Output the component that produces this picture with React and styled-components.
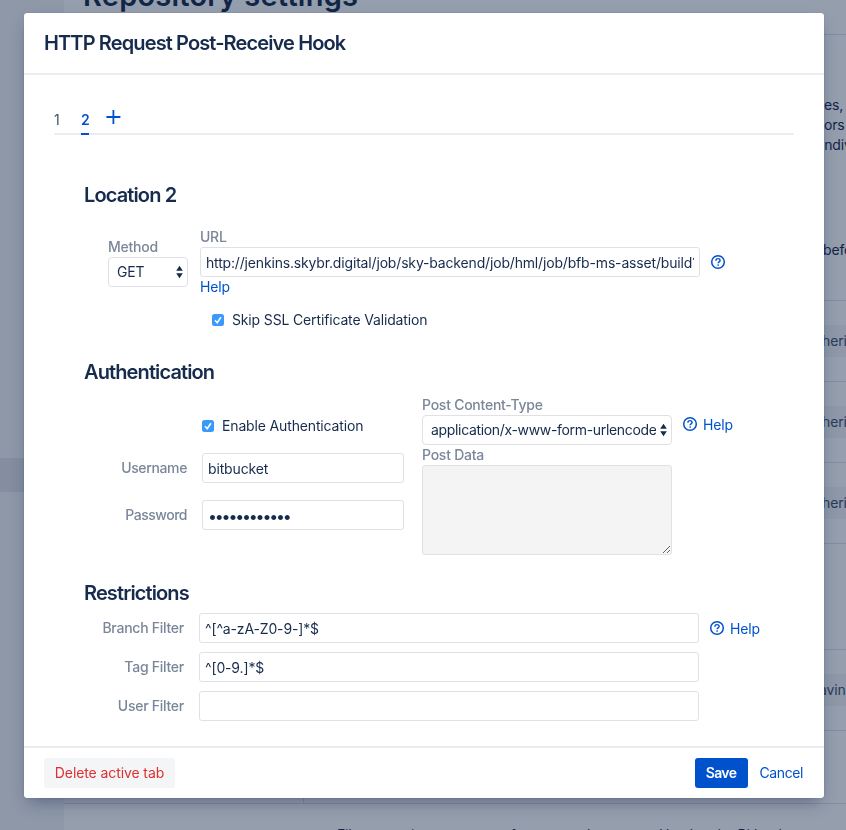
import React from "react";
import styled, { createGlobalStyle, css } from "styled-components";

const GlobalStyle = createGlobalStyle`
  * { box-sizing: border-box; }
  body {
    margin: 0;
    overflow: hidden;
    background: #fff;
    color: #172b4d;
    font: 400 14px/20px Inter, "Liberation Sans", sans-serif;
    letter-spacing: -0.15px;
  }
  h1, h2, h3, p { margin: 0; }
  button, input, textarea { font: inherit; letter-spacing: inherit; color: inherit; }
`;

/* ---------- page behind the dialog ---------- */

const Page = styled.div`
  display: grid;
  grid-template-columns: 64px 1fr;
  height: 830px;
  overflow: hidden;
`;

const Sidebar = styled.nav`
  background: #f4f5f7;
  padding-top: 458px;
`;

const SidebarItem = styled.div`
  height: 34px;
  background: rgba(9, 30, 66, 0.08);
`;

const Main = styled.main`
  display: flex;
  flex-direction: column;
  overflow: hidden;
`;

const PageHeader = styled.header`
  flex: none;
  height: 35px;
  padding-left: 19px;
  border-bottom: 1px solid #dfe1e6;
`;

const PageTitle = styled.h1`
  margin-top: -19px;
  font-size: 29px;
  line-height: 30px;
  font-weight: 600;
  letter-spacing: 0.22px;
`;

const HookRow = styled.section`
  flex: none;
  display: flex;
  justify-content: flex-end;
  height: ${(p) => p.$height}px;
  padding-top: ${(p) => p.$top || 24}px;
  border-bottom: 1px solid #dfe1e6;
`;

const Description = styled.p`
  width: 22px;
  white-space: nowrap;
`;

const DescriptionLine = styled.span`
  display: block;
  height: 20px;
  margin-left: ${(p) => p.$shift || 0}px;
  margin-top: ${(p) => p.$gap || 0}px;
`;

const StatusButton = styled.div`
  width: 30px;
  height: 32px;
  padding: 6px 0 0 ${(p) => p.$inset}px;
  background: #f4f5f7;
  color: #42526e;
  white-space: nowrap;
`;

const HookColumn = styled.div`
  flex: none;
  height: 5px;
  margin-top: -6px;
  margin-left: 239px;
  border-left: 1px solid #dfe1e6;
`;

const HookSummary = styled.p`
  flex: none;
  display: grid;
  grid-template-columns: 149px 173px 1fr;
  margin: 22px 0 0 273px;
  white-space: nowrap;
`;

/* ---------- dialog ---------- */

const Blanket = styled.div`
  position: fixed;
  inset: 0;
  padding: 13px 22px 32px 24px;
  background: rgba(9, 30, 66, 0.43);
`;

const Dialog = styled.section`
  display: flex;
  flex-direction: column;
  height: 785px;
  background: #fff;
  border-radius: 3px;
  box-shadow: 0 0 1px rgba(9, 30, 66, 0.31), 0 8px 16px -4px rgba(9, 30, 66, 0.38);
`;

const heading = css`
  font-size: 20px;
  line-height: 28px;
  font-weight: 600;
  letter-spacing: -0.88px;
`;

const DialogHeader = styled.header`
  height: 62px;
  padding: 16px 20px 0;
  border-bottom: 2px solid #ebecf0;
`;

const DialogTitle = styled.h2`
  ${heading}
`;

const DialogBody = styled.div`
  flex: 1;
  padding: 30px 30px 0;
`;

const TabBar = styled.div`
  display: flex;
  align-items: flex-end;
  height: 30px;
  border-bottom: 2px solid #ebecf0;
`;

const Tab = styled.div`
  height: 26px;
  margin-bottom: -2px;
  margin-right: ${(p) => (p.$active ? 16 : 17)}px;
  width: ${(p) => (p.$active ? 8 : 10)}px;
  padding-top: 1px;
  color: ${(p) => (p.$active ? "#0052cc" : "#42526e")};
  font-weight: ${(p) => (p.$active ? 600 : 400)};
  border-bottom: 2px solid ${(p) => (p.$active ? "#0052cc" : "transparent")};
`;

const AddTab = styled.div`
  display: flex;
  margin-bottom: 8px;
`;

const Section = styled.section`
  padding: ${(p) => p.$top}px 30px 0;
`;

const SectionTitle = styled.h3`
  ${heading}
`;

const FieldRow = styled.div`
  display: flex;
  align-items: ${(p) => p.$align || "flex-start"};
  margin-top: ${(p) => p.$gap || 0}px;
  margin-left: ${(p) => p.$inset || 0}px;
`;

const Field = styled.div`
  width: ${(p) => p.$width}px;
  margin-right: ${(p) => p.$after || 0}px;
  padding-top: ${(p) => p.$top || 0}px;
`;

const Label = styled.label`
  display: block;
  color: #7a869a;
  font-weight: 500;
  letter-spacing: -0.25px;
`;

const SideLabel = styled(Label)`
  width: ${(p) => p.$width}px;
  margin-right: 15px;
  text-align: right;
  letter-spacing: ${(p) => p.$track || -0.26}px;
`;

const TextInput = styled.input`
  display: block;
  width: ${(p) => p.$width}px;
  height: 30px;
  padding: 1px 5px 0;
  border: 1px solid #dfe1e6;
  border-radius: 3px;
  outline: none;
  background: #fff;
`;

const UrlInput = styled(TextInput)`
  letter-spacing: -0.168px;
`;

const PasswordInput = styled(TextInput)`
  padding-left: 5px;
  font-size: 16px;
  letter-spacing: -2.2px;
`;

const SelectBox = styled.div`
  display: flex;
  align-items: center;
  width: ${(p) => p.$width}px;
  height: 30px;
  padding: 0 4px 0 8px;
  border: 1px solid #dfe1e6;
  border-radius: 4px;
  letter-spacing: ${(p) => p.$track || -0.17}px;
`;

const SelectValue = styled.span`
  flex: 1;
  min-width: 0;
  margin-right: 4px;
  overflow: hidden;
  white-space: nowrap;
`;

const PostData = styled.textarea`
  display: block;
  width: 250px;
  height: 90px;
  border: 1px solid #dfe1e6;
  border-radius: 3px;
  background: #f4f4f4;
  resize: both;
`;

const CheckLabel = styled.label`
  display: flex;
  align-items: center;
  gap: 8px;
  height: 20px;
  margin-left: ${(p) => p.$inset}px;
`;

const Link = styled.a`
  display: block;
  color: #0052cc;
`;

const HelpLink = styled.a`
  display: flex;
  align-items: center;
  gap: 5px;
  height: 20px;
  margin-top: ${(p) => p.$top}px;
  margin-left: 10px;
  color: #0052cc;
`;

const HelpText = styled.span`
  padding-top: 2px;
`;

const DialogFooter = styled.footer`
  display: flex;
  align-items: center;
  height: 52px;
  padding: 0 20px;
  border-top: 2px solid #ebecf0;
`;

const Button = styled.button`
  height: 30px;
  padding: 0;
  border: 0;
  border-radius: 3px;
  width: ${(p) => p.$width}px;
  margin-left: ${(p) => (p.$push ? "auto" : 0)};
  ${(p) => p.$kind === "danger" && css`background: #f4f5f7; color: #e02f2f; letter-spacing: -0.1px;`}
  ${(p) => p.$kind === "primary" && css`background: #0052cc; color: #fff; font-weight: 600; letter-spacing: -0.6px; padding-right: 1px;`}
  ${(p) => p.$kind === "link" && css`background: none; color: #0052cc; text-align: right; letter-spacing: -0.4px; padding-right: 1px;`}
`;

/* ---------- icons ---------- */

const PlusIcon = () => (
  <svg width="16" height="16" viewBox="0 0 16 16">
    <path d="M8.4 1v14M1.4 8h14" stroke="#0052cc" strokeWidth="1.8" />
  </svg>
);

const HelpIcon = () => (
  <svg width="16" height="16" viewBox="0 0 16 16" fill="none" stroke="#0052cc">
    <circle cx="8" cy="8" r="6.3" strokeWidth="1.5" />
    <path d="M5.9 6.7C5.9 5.4 6.8 4.6 8 4.6s2.1.8 2.1 1.9c0 1.4-2 1.4-2 2.8" strokeWidth="1.4" />
    <circle cx="8.1" cy="11" r=".85" fill="#0052cc" stroke="none" />
  </svg>
);

const Arrows = () => (
  <svg width="7" height="14" viewBox="0 0 7 14" fill="#172b4d">
    <path d="M3.5 .7L6.8 5.7H.2zM3.5 13.3L.2 8.3h6.6z" />
  </svg>
);

const CheckIcon = () => (
  <svg width="12" height="12" viewBox="0 0 12 12">
    <rect width="12" height="12" rx="2.5" fill="#3b99fc" />
    <path d="M3 6.3l2.2 2.4L8.9 3.2" fill="none" stroke="#fff" strokeWidth="1.6" />
  </svg>
);

const FILTERS = [
  { label: "Branch Filter", value: "^[^a-zA-Z0-9-]*$", help: true },
  { label: "Tag Filter", value: "^[0-9.]*$" },
  { label: "User Filter", value: "" },
];

export default function App() {
  return (
    <>
      <GlobalStyle />
      <Page>
        <Sidebar>
          <SidebarItem />
        </Sidebar>
        <Main>
          <PageHeader>
            <PageTitle>Repository settings</PageTitle>
          </PageHeader>
          <HookRow $height={266} $top={60}>
            <Description>
              <DescriptionLine>es,</DescriptionLine>
              <DescriptionLine>ors</DescriptionLine>
              <DescriptionLine $shift={-3}>indiv</DescriptionLine>
              <DescriptionLine $gap={85} $shift={-1}>befo</DescriptionLine>
            </Description>
          </HookRow>
          {[0, 1, 2].map((row) => (
            <HookRow key={row} $height={81}>
              <StatusButton $inset={6}>heri</StatusButton>
            </HookRow>
          ))}
          <HookRow $height={106} />
          <HookRow $height={81}>
            <StatusButton $inset={3}>aving</StatusButton>
          </HookRow>
          <HookRow $height={73} />
          <HookColumn />
          <HookSummary>
            <span>Files commits</span>
            <span>not from trusted</span>
            <span>Used to the Bitbucket</span>
          </HookSummary>
        </Main>
      </Page>

      <Blanket>
        <Dialog>
          <DialogHeader>
            <DialogTitle>HTTP Request Post-Receive Hook</DialogTitle>
          </DialogHeader>

          <DialogBody>
            <TabBar>
              <Tab>1</Tab>
              <Tab $active>2</Tab>
              <AddTab>
                <PlusIcon />
              </AddTab>
            </TabBar>

            <Section $top={46}>
              <SectionTitle>Location 2</SectionTitle>
              <FieldRow $gap={18} $inset={24}>
                <Field $width={80} $after={12} $top={10}>
                  <Label>Method</Label>
                  <SelectBox $width={80}>
                    <SelectValue>GET</SelectValue>
                    <Arrows />
                  </SelectBox>
                </Field>
                <Field $width={500}>
                  <Label>URL</Label>
                  <UrlInput
                    $width={500}
                    readOnly
                    value="http://jenkins.skybr.digital/job/sky-backend/job/hml/job/bfb-ms-asset/build?token"
                  />
                  <Link>Help</Link>
                </Field>
                <HelpLink $top={25}>
                  <HelpIcon />
                </HelpLink>
              </FieldRow>
              <FieldRow $gap={13}>
                <CheckLabel $inset={128}>
                  <CheckIcon />
                  Skip SSL Certificate Validation
                </CheckLabel>
              </FieldRow>
            </Section>

            <Section $top={28}>
              <SectionTitle>Authentication</SectionTitle>
              <FieldRow $gap={9}>
                <Field $width={320} $after={18} $top={21}>
                  <CheckLabel $inset={118}>
                    <CheckIcon />
                    Enable Authentication
                  </CheckLabel>
                  <FieldRow $gap={17} $align="center">
                    <SideLabel $width={103} $track={-0.36}>Username</SideLabel>
                    <TextInput $width={202} readOnly value="bitbucket" />
                  </FieldRow>
                  <FieldRow $gap={17} $align="center">
                    <SideLabel $width={103} $track={-0.48}>Password</SideLabel>
                    <PasswordInput $width={202} readOnly value="••••••••••••" />
                  </FieldRow>
                </Field>
                <Field $width={250}>
                  <Label>Post Content-Type</Label>
                  <SelectBox $width={250} $track={-0.33}>
                    <SelectValue>application/x-www-form-urlencoded</SelectValue>
                    <Arrows />
                  </SelectBox>
                  <Label>Post Data</Label>
                  <PostData readOnly />
                </Field>
                <HelpLink $top={19}>
                  <HelpIcon />
                  <HelpText>Help</HelpText>
                </HelpLink>
              </FieldRow>
            </Section>

            <Section $top={24}>
              <SectionTitle>Restrictions</SectionTitle>
              {FILTERS.map((filter, i) => (
                <FieldRow key={filter.label} $gap={i ? 9 : 6} $align="center">
                  <SideLabel $width={100}>{filter.label}</SideLabel>
                  <TextInput $width={500} readOnly value={filter.value} />
                  {filter.help && (
                    <HelpLink $top={0}>
                      <HelpIcon />
                      <HelpText>Help</HelpText>
                    </HelpLink>
                  )}
                </FieldRow>
              ))}
            </Section>
          </DialogBody>

          <DialogFooter>
            <Button $kind="danger" $width={131}>Delete active tab</Button>
            <Button $kind="primary" $width={53} $push>Save</Button>
            <Button $kind="link" $width={56}>Cancel</Button>
          </DialogFooter>
        </Dialog>
      </Blanket>
    </>
  );
}
